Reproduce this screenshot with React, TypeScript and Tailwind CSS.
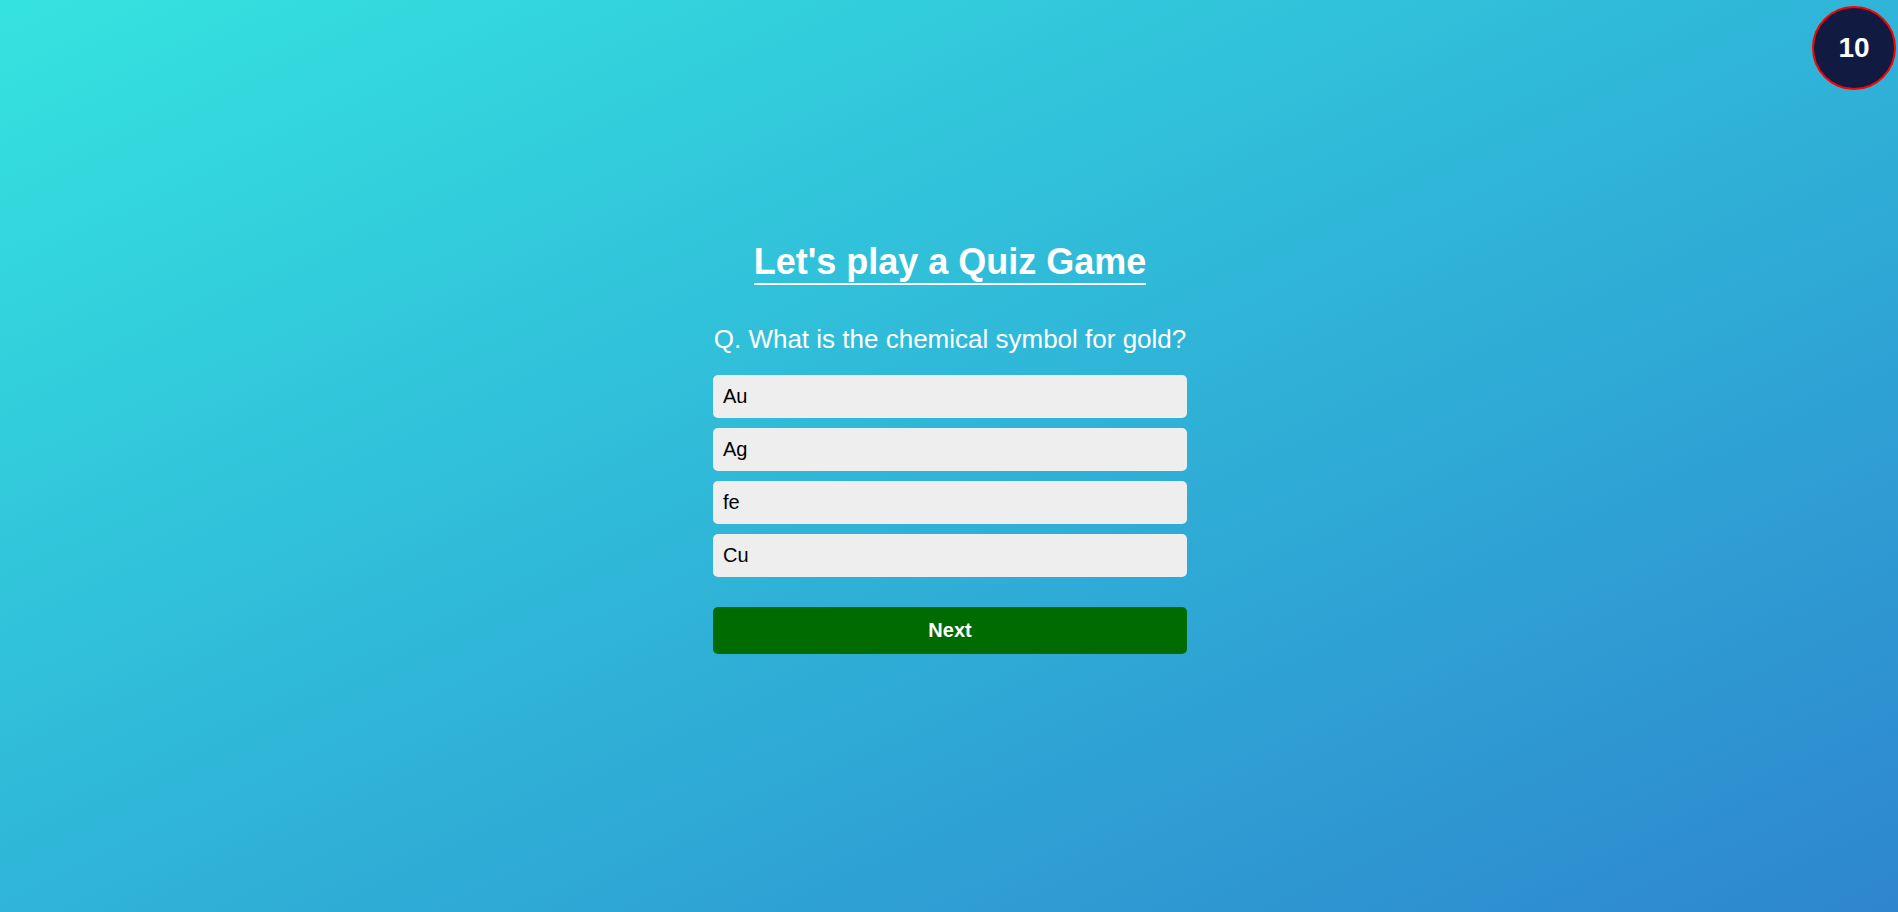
import React from "react";

export default function App() {
  const options = ["Au", "Ag", "fe", "Cu"];
  return (
    <div
      className="relative w-full h-[912px] overflow-hidden bg-gradient-to-br from-[#35e3df] to-[#2e86ce] flex flex-col items-center pt-[241px] pl-[2px]"
      style={{ fontFamily: '"Liberation Sans", Arial, sans-serif' }}
    >
      <div className="absolute top-[6px] right-[2px] w-[84px] h-[84px] rounded-full bg-[#111a40] border-2 border-[#ff0000] flex items-center justify-center text-white font-bold text-[28px]">
        10
      </div>
      <h1 className="inline-block text-white font-bold text-[36px] leading-[normal] border-b-[2px] border-white">
        Let's play a Quiz Game
      </h1>
      <p className="mt-[39px] text-white text-[26px] leading-[normal]">
        Q. What is the chemical symbol for gold?
      </p>
      <div className="mt-[20px] w-[474px] flex flex-col gap-[10px]">
        {options.map((o) => (
          <div
            key={o}
            className="h-[43px] bg-[#eeeeee] rounded-[5px] flex items-center pl-[10px] text-black text-[20px] leading-[normal]"
          >
            {o}
          </div>
        ))}
      </div>
      <button className="mt-[30px] w-[474px] h-[47px] bg-[#006b00] rounded-[5px] text-white font-bold text-[20px] leading-[normal]">
        Next
      </button>
    </div>
  );
}
